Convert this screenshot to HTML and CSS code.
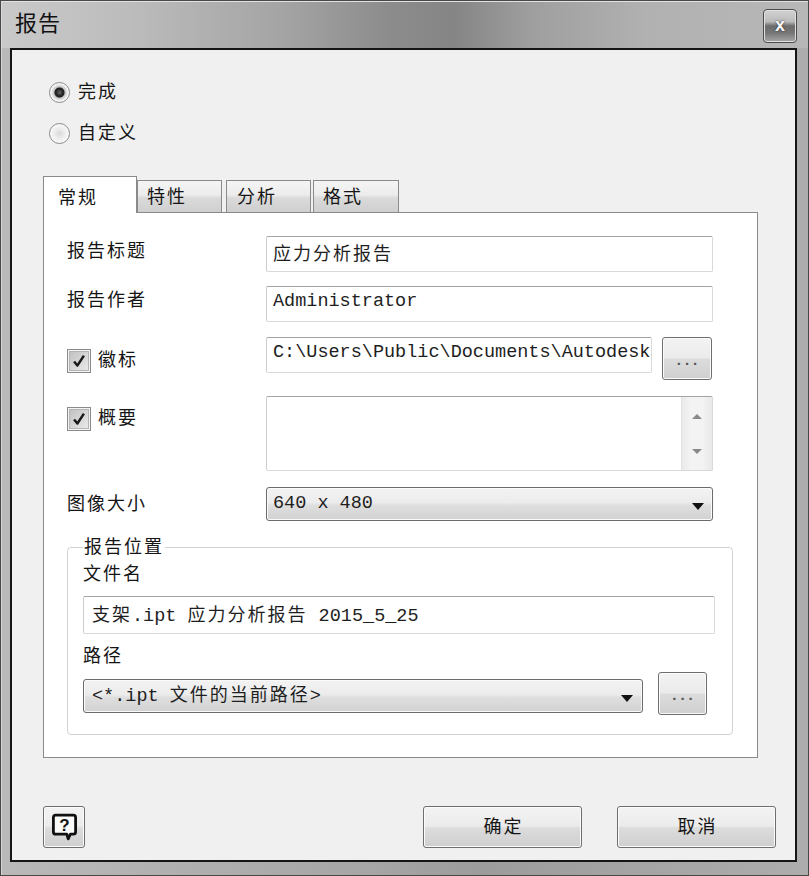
FILE: index.html
```html
<!DOCTYPE html>
<html lang="zh-CN">
<head>
<meta charset="utf-8">
<title>报告</title>
<link rel="stylesheet" href="styles.css">
</head>
<body>
<div class="window">
  <div class="titlebar">
    <span class="title">报告</span>
    <span class="close">x</span>
  </div>
  <div class="frame">
    <div class="client">
      <div class="radios">
        <div class="radio-row"><span class="radio checked"></span><span class="cjk-label">完成</span></div>
        <div class="radio-row"><span class="radio"></span><span class="cjk-label">自定义</span></div>
      </div>

      <div class="tabs">
        <div class="tab active">常规</div>
        <div class="tab t2">特性</div>
        <div class="tab t3">分析</div>
        <div class="tab t4">格式</div>
      </div>

      <div class="panel">
        <div class="row r1">
          <span class="label">报告标题</span>
          <div class="input"><span class="cjk">应力分析报告</span></div>
        </div>
        <div class="row r2">
          <span class="label">报告作者</span>
          <div class="input">Administrator</div>
        </div>
        <div class="row r3">
          <div class="chk-label">
            <span class="checkbox"><svg width="22" height="22" viewBox="0 0 22 22"><path d="M5 11.5 L9 16.5 L17 4.5" fill="none" stroke="#1a1a1a" stroke-width="3" stroke-linejoin="round"/></svg></span>
            <span class="cjk-label">徽标</span>
          </div>
          <div class="input logo-path">C:\Users\Public\Documents\Autodesk</div>
          <div class="btn dots">...</div>
        </div>
        <div class="row r4">
          <div class="chk-label c2">
            <span class="checkbox"><svg width="22" height="22" viewBox="0 0 22 22"><path d="M5 11.5 L9 16.5 L17 4.5" fill="none" stroke="#1a1a1a" stroke-width="3" stroke-linejoin="round"/></svg></span>
            <span class="cjk-label">概要</span>
          </div>
          <div class="textarea">
            <div class="scrollbar"><span class="arr-up"></span><span class="arr-down"></span></div>
          </div>
        </div>
        <div class="row r5">
          <span class="label">图像大小</span>
          <div class="combo"><span class="combo-text">640 x 480</span><span class="combo-arrow"></span></div>
        </div>

        <fieldset class="group">
          <legend>报告位置</legend>
          <div class="fs-label first">文件名</div>
          <div class="input file-input"><span class="cjk">支架</span>.ipt <span class="cjk">应力分析报告</span> 2015_5_25</div>
          <div class="fs-label second">路径</div>
          <div class="path-row">
            <div class="combo path-combo"><span class="combo-text">&lt;*.ipt <span class="cjk">文件的当前路径</span>&gt;</span><span class="combo-arrow"></span></div>
            <div class="btn dots path-btn">...</div>
          </div>
        </fieldset>
      </div>

      <div class="footer">
        <div class="btn help">
          <svg width="27" height="28" viewBox="0 0 27 28">
            <path d="M4.6 2.2 H22.4 Q24.6 2.2 24.6 4.4 V19 Q24.6 21.2 22.4 21.2 H19.4 L17.2 25.8 L15.8 21.2 H4.6 Q2.4 21.2 2.4 19 V4.4 Q2.4 2.2 4.6 2.2 Z" fill="#fbfbfb" stroke="#111" stroke-width="2.8" stroke-linejoin="round"/>
            <text x="13.5" y="18" text-anchor="middle" font-family="Liberation Sans, Arial, sans-serif" font-weight="bold" font-size="17" fill="#111">?</text>
          </svg>
        </div>
        <div class="actions">
          <div class="btn action">确定</div>
          <div class="btn action">取消</div>
        </div>
      </div>
    </div>
  </div>
</div>
</body>
</html>
```

FILE: styles.css
```css
html, body {
  margin: 0;
  padding: 0;
}

body {
  width: 809px;
  height: 876px;
  overflow: hidden;
  font-family: "Noto Sans CJK SC", sans-serif;
  font-size: 18px;
  color: #151515;
}

.window {
  box-sizing: border-box;
  height: 876px;
  border: 1px solid #484848;
  display: flex;
  flex-direction: column;
  background: linear-gradient(90deg, #b9b9b9 0%, #a6a6a6 45%, #9c9c9c 60%, #adadad 100%);
}

.titlebar {
  flex: none;
  height: 47px;
  display: flex;
  justify-content: space-between;
  padding: 0 11px 0 14px;
  background: linear-gradient(90deg, #c9c9c9 0%, #bdbdbd 15%, #a4a4a4 35%, #8c8c8c 48%, #858585 56%, #9f9f9f 66%, #b1b1b1 80%, #b7b7b7 100%);
  box-shadow: inset 0 1px 0 #e2e2e2, inset 1px 0 0 #d8d8d8;
}

.title {
  font-size: 22px;
  line-height: 41px;
  color: #111;
  letter-spacing: 1px;
}

.close {
  margin-top: 8px;
  width: 34px;
  height: 34px;
  box-sizing: border-box;
  border: 1px solid #4c4c4c;
  border-radius: 4px;
  background: linear-gradient(#d2d2d2 0%, #bcbcbc 36%, #6c6c6c 50%, #767676 72%, #a8a8a8 100%);
  box-shadow: inset 0 0 0 1px #e0e0e0;
  color: #f8f8f8;
  font-family: "Liberation Sans", Arial, sans-serif;
  font-weight: bold;
  font-size: 18px;
  line-height: 30px;
  text-align: center;
  text-shadow: 0 0 2px #222;
}

.frame {
  flex: 1;
  display: flex;
  padding: 0 11px 13px 9px;
  box-shadow: inset 1px 0 0 #d4d4d4;
}

.client {
  flex: 1;
  border: 2px solid #151515;
  background: #f0f0f0;
  display: flex;
  flex-direction: column;
  padding-top: 32px;
}

/* radios */
.radios {
  padding-left: 37px;
  display: flex;
  flex-direction: column;
  gap: 20px;
}

.radio-row {
  display: flex;
  align-items: center;
  height: 21px;
  gap: 8px;
}

.radio {
  width: 21px;
  height: 21px;
  box-sizing: border-box;
  border-radius: 50%;
  border: 1px solid #8b8b8b;
  background: radial-gradient(circle at 50% 50%, #d9d9d9 0, #ececec 5px, #f7f7f7 9px);
  box-shadow: inset 0 0 0 1px #fafafa;
}

.radio.checked {
  background: radial-gradient(circle at 50% 50%, #6a6a6a 0, #2b2b2b 3px, #1e1e1e 4.5px, #bdbdbd 5.5px, #dedede 7px, #f6f6f6 9px);
}

.cjk-label {
  line-height: 20px;
  letter-spacing: 2px;
  padding-bottom: 6px;
}

/* tabs */
.tabs {
  margin: 32px 0 0 31px;
  height: 36px;
  display: flex;
  align-items: flex-end;
  position: relative;
  z-index: 1;
}

.tab {
  box-sizing: border-box;
  height: 32px;
  border: 1px solid #8a8a8a;
  border-bottom: none;
  background: linear-gradient(#f5f5f5 0%, #ececec 45%, #dadada 55%, #cfcfcf 100%);
  line-height: 20px;
  padding-top: 4px;
  letter-spacing: 2px;
}

.tab.active {
  width: 94px;
  height: 37px;
  margin-bottom: -1px;
  background: #ffffff;
  padding: 9px 0 0 14px;
}

.tab.t2 { width: 85px; padding-left: 9px; }
.tab.t3 { width: 85px; margin-left: 4px; padding-left: 10px; }
.tab.t4 { width: 86px; margin-left: 2px; padding-left: 9px; }

/* panel */
.panel {
  margin-left: 31px;
  width: 715px;
  height: 546px;
  box-sizing: border-box;
  border: 1px solid #8a8a8a;
  background: #ffffff;
  padding: 0 44px 0 23px;
}

.row {
  display: flex;
  align-items: flex-start;
}

.label {
  width: 199px;
  flex: none;
  line-height: 20px;
  letter-spacing: 2px;
}

.input, .textarea {
  box-sizing: border-box;
  border: 1px solid #d9d9d9;
  border-top-color: #a3a3a3;
  border-left-color: #cdcdcd;
  border-radius: 2px;
  background: #ffffff;
}

.input {
  flex: 1;
  height: 36px;
  padding-left: 6px;
  line-height: 30px;
  white-space: nowrap;
  overflow: hidden;
  font-family: "Liberation Mono", "Noto Sans CJK SC", monospace;
  font-size: 18.5px;
  color: #1e1e1e;
}

.cjk {
  font-family: "Noto Sans CJK SC", sans-serif;
  font-size: 18px;
  letter-spacing: 2px;
}

.r1 { margin-top: 23px; }
.r1 .label { margin-top: 3px; }
.r2 { margin-top: 14px; }
.r2 .label { margin-top: 2px; }
.r3 { margin-top: 15px; }
.r4 { margin-top: 16px; }
.r5 { margin-top: 16px; }
.r5 .label { margin-top: 5px; }

.chk-label {
  width: 199px;
  flex: none;
  display: flex;
  align-items: center;
  gap: 7px;
  margin-top: 12px;
  height: 24px;
}

.chk-label.c2 { margin-top: 11px; }

.checkbox {
  width: 24px;
  height: 24px;
  box-sizing: border-box;
  border: 1px solid #8a8a8a;
  padding: 1px;
  background: #f4f4f4;
  display: flex;
}

.checkbox svg {
  background: linear-gradient(135deg, #c2c2c2, #e9e9e9);
  border: 1px solid #b5b5b5;
  box-sizing: border-box;
  width: 20px;
  height: 20px;
}

.logo-path {
  flex: none;
  width: 386px;
  padding-right: 0;
}

.btn {
  box-sizing: border-box;
  border: 1px solid #6e6e6e;
  border-radius: 3px;
  background: linear-gradient(#f3f3f3 0%, #ebebeb 48%, #dcdcdc 52%, #cfcfcf 100%);
  box-shadow: inset 0 0 0 1px #fbfbfb;
  display: flex;
  align-items: center;
  justify-content: center;
}

.dots {
  width: 50px;
  height: 43px;
  margin-left: 10px;
  font-family: "Liberation Sans", Arial, sans-serif;
  font-size: 15px;
  font-weight: bold;
  letter-spacing: 4px;
  padding: 2px 0 0 4px;
  color: #555;
}

.textarea {
  flex: 1;
  height: 75px;
  display: flex;
  justify-content: flex-end;
}

.scrollbar {
  width: 31px;
  height: 73px;
  box-sizing: border-box;
  background: linear-gradient(90deg, #eaeaea, #f3f3f3 30%, #f3f3f3 70%, #e8e8e8);
  border-left: 1px solid #e2e2e2;
  padding: 17px 0 16px;
  display: flex;
  flex-direction: column;
  justify-content: space-between;
  align-items: center;
}

.arr-up {
  width: 0;
  height: 0;
  border-left: 5px solid transparent;
  border-right: 5px solid transparent;
  border-bottom: 5px solid #8a8a8a;
}

.arr-down {
  width: 0;
  height: 0;
  border-left: 5px solid transparent;
  border-right: 5px solid transparent;
  border-top: 5px solid #8a8a8a;
}

.combo {
  flex: 1;
  height: 34px;
  box-sizing: border-box;
  border: 1px solid #6b6b6b;
  border-radius: 3px;
  background: linear-gradient(#f3f3f3 0%, #ececec 45%, #dedede 55%, #d2d2d2 100%);
  box-shadow: inset 0 0 0 1px #fafafa;
  display: flex;
  align-items: center;
  padding: 0 8px 0 6px;
  font-family: "Liberation Mono", "Noto Sans CJK SC", monospace;
  font-size: 18.5px;
  color: #1e1e1e;
}

.combo-text {
  flex: 1;
  white-space: nowrap;
  overflow: hidden;
  line-height: 24px;
}

.combo-arrow {
  width: 0;
  height: 0;
  margin-top: 5px;
  border-left: 6px solid transparent;
  border-right: 6px solid transparent;
  border-top: 7px solid #111;
}

/* group box */
.group {
  margin: 14px 0 0 0;
  width: 666px;
  box-sizing: border-box;
  border: 1px solid #d3d3d3;
  border-radius: 4px;
  padding: 0 17px 19px 15px;
  box-shadow: inset 0 0 0 1px #ffffff;
}

.group legend {
  padding: 0 1px 4px;
  line-height: 20px;
  letter-spacing: 2px;
}

.fs-label {
  line-height: 20px;
  letter-spacing: 2px;
}

.fs-label.first { margin-top: 3px; }
.fs-label.second { margin-top: 10px; }

.file-input {
  margin-top: 14px;
  height: 38px;
  padding-left: 8px;
  line-height: 33px;
}

.path-row {
  margin-top: 8px;
  display: flex;
  align-items: flex-start;
}

.path-combo {
  flex: none;
  width: 560px;
  margin-top: 7px;
  padding: 0 9px 0 8px;
}

.path-combo .combo-text {
  padding-bottom: 2px;
}

.path-btn {
  width: 49px;
  margin-left: 15px;
}

/* footer */
.footer {
  margin-top: 48px;
  padding: 0 19px 0 31px;
  display: flex;
  align-items: flex-start;
}

.help {
  width: 42px;
  height: 42px;
}

.actions {
  margin-left: auto;
  display: flex;
  gap: 35px;
}

.action {
  width: 159px;
  height: 42px;
  letter-spacing: 2px;
  padding: 0 0 4px 2px;
}
```
